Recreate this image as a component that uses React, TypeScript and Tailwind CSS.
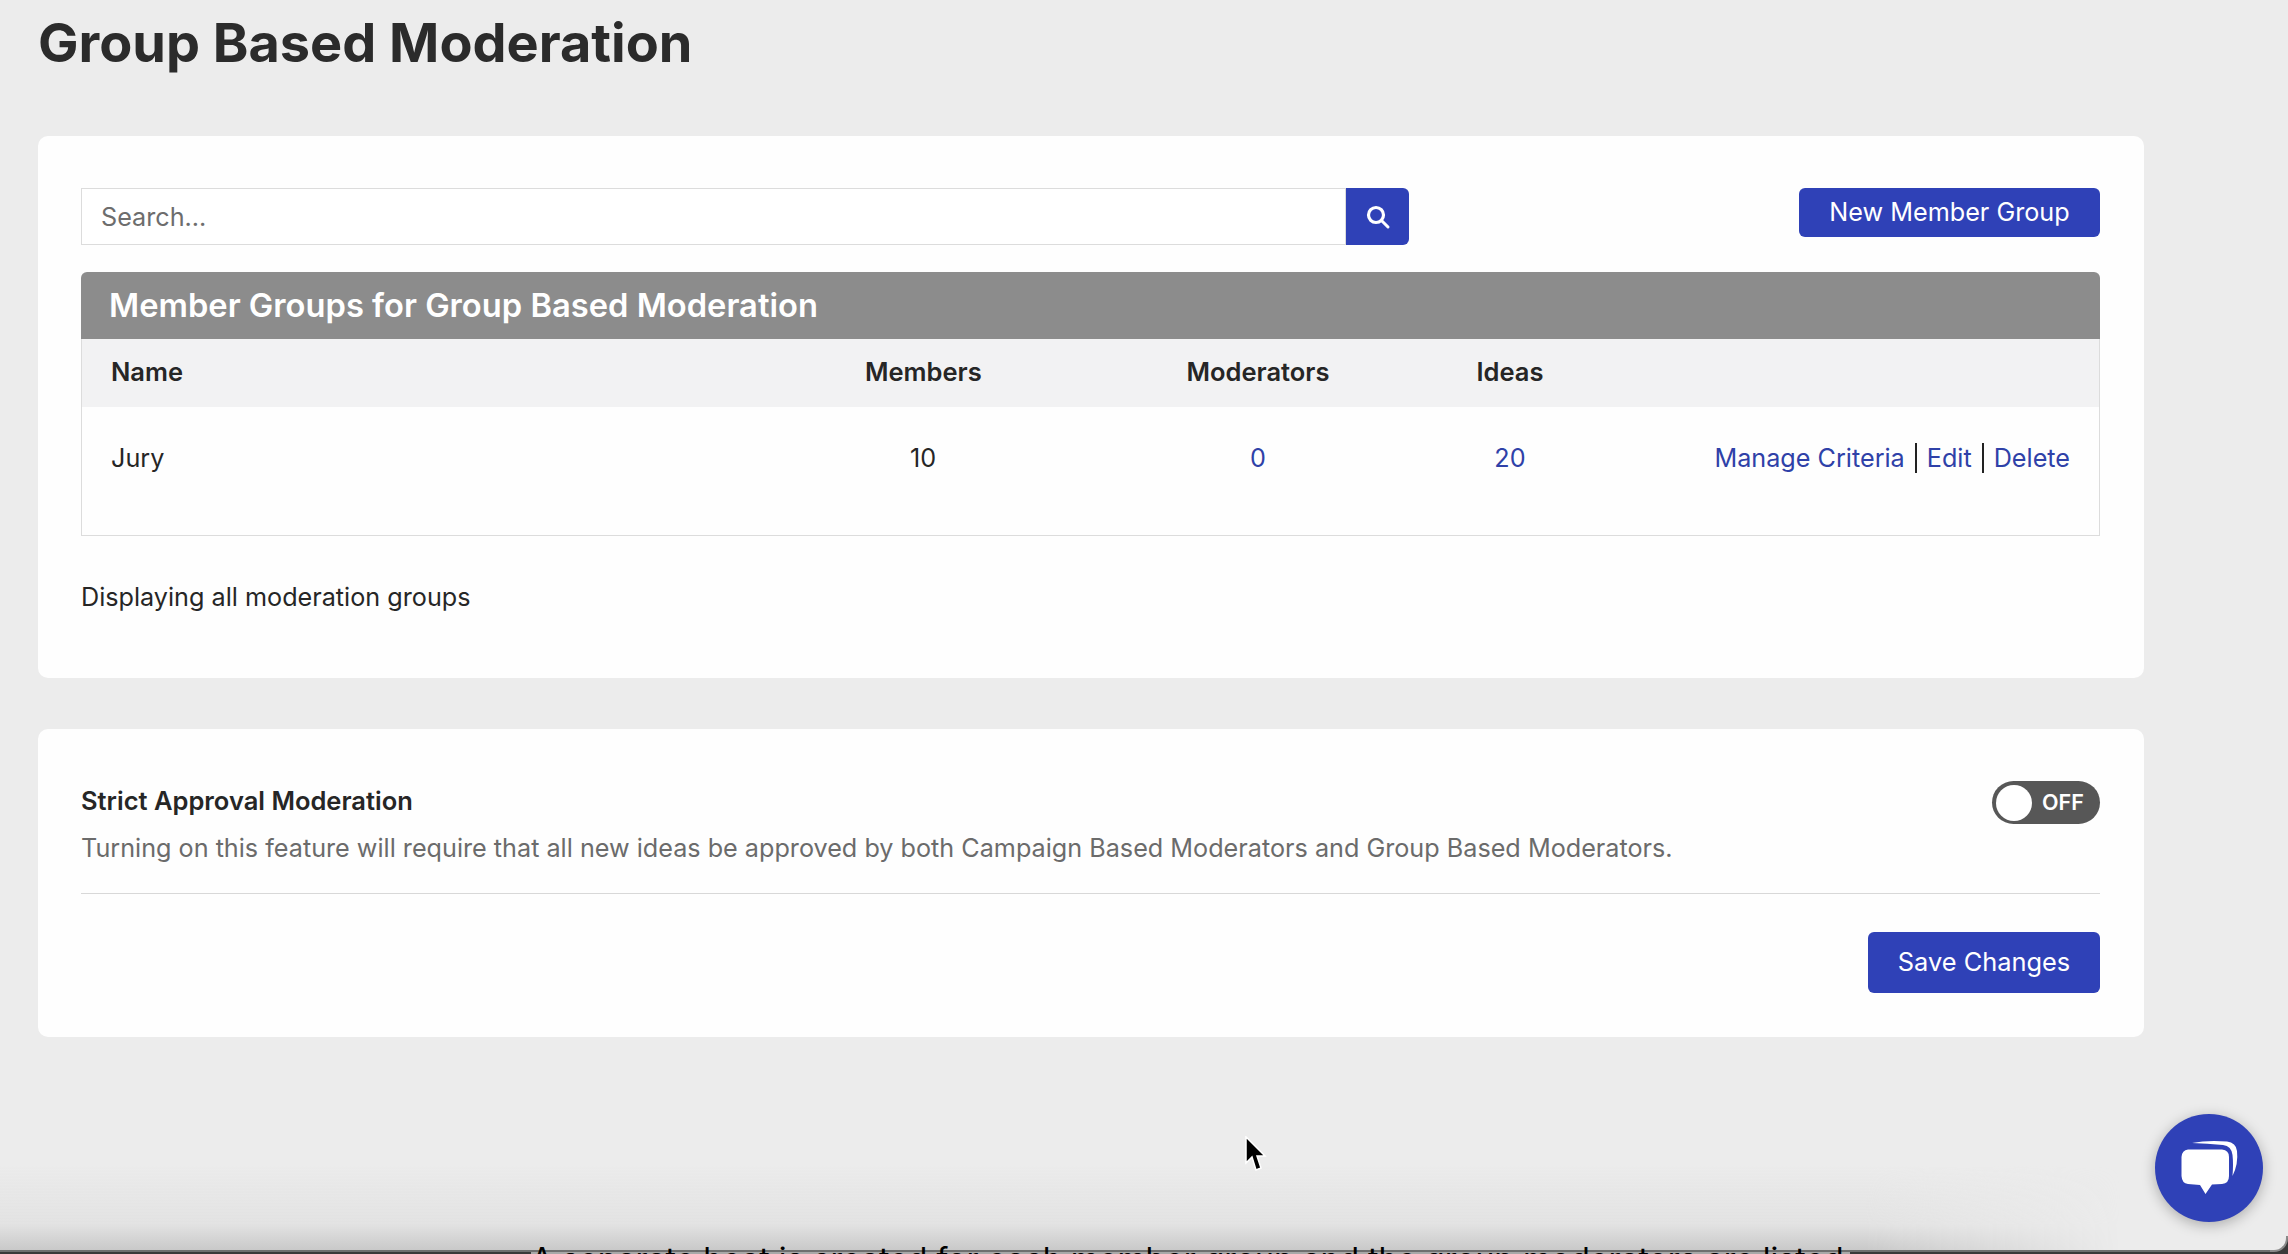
const inter = "font-['Inter',sans-serif]";

function SearchIcon() {
  return (
    <svg width="26" height="26" viewBox="0 0 26 26" fill="none" stroke="#fff">
      <circle cx="11" cy="11" r="7.500" strokeWidth="3.200" />
      <path d="M16.500 16.500 L23 23" strokeWidth="3" strokeLinecap="round" />
    </svg>
  );
}

function Toggle() {
  return (
    <div className="flex h-[43px] w-[108px] items-center rounded-full bg-[#575757] pl-[4px]">
      <span className="h-[36px] w-[36px] rounded-full bg-white" />
      <span className="ml-[10px] text-[21.500px] font-semibold text-white">OFF</span>
    </div>
  );
}

function ChatBubble() {
  return (
    <div className="absolute left-[2155px] top-[1114px] z-20 h-[108px] w-[108px] rounded-full bg-[#2f41b7] shadow-[0_3px_14px_rgba(0,0,0,0.28)]">
      <svg width="108" height="108" viewBox="0 0 108 108">
        <path d="M37 29 Q52 26 72 27.500 Q81 28.500 82 37 Q83.500 50 77.500 62 Q78.500 50 77.500 41 Q76.500 32 68 31 Q52 29.500 37 29 Z" fill="#fff" />
        <path d="M33 35.500 L67 35.500 Q74 36 74 43 L74 62 Q74 69.500 67 70 L57 70.500 L50.500 80 L45 71 L33 70 Q27 69.500 26.500 62 L26.500 43 Q27 36 33 35.500 Z" fill="#fff" />
      </svg>
    </div>
  );
}

function Cursor() {
  return (
    <svg className="absolute left-[1244px] top-[1136px] z-20" width="24" height="38" viewBox="0 0 24 38">
      <path d="M2 1 L2 27 L8 21 L12 34 L17 32 L13 20 L21 20 Z" fill="#000" stroke="#fff" strokeWidth="1.500" />
    </svg>
  );
}

export default function App() {
  return (
    <div className={`relative h-[1254px] w-[2288px] overflow-hidden bg-[#ececec] text-[#262626] ${inter}`}>
      <div className="pl-[38px] pr-[144px]">
        <h1 className="flex h-[136px] items-start pt-[12px] text-[54px] font-bold leading-[62px] text-[#2b2b2b]">Group Based Moderation</h1>

        <section className="h-[542px] rounded-[10px] bg-[#fefefe] pl-[43px] pr-[44px] pt-[52px]">
          <div className="flex items-start justify-between">
            <div className="flex h-[57px] w-[1328px]">
              <div className="flex flex-1 items-center border border-[#dcdcdc] bg-white pl-[19px] pt-[2px] text-[25.200px] text-[#6d6d6d]">Search...</div>
              <button className="flex w-[63px] items-center justify-center rounded-r-[6px] bg-[#2f41b7]">
                <SearchIcon />
              </button>
            </div>
            <button className="flex h-[49px] w-[301px] items-center justify-center rounded-[6px] bg-[#2f41b7] text-[25.200px] text-white">New Member Group</button>
          </div>

          <div className="mt-[27px]">
            <div className="flex h-[67px] items-center rounded-t-[6px] bg-[#8c8c8c] pl-[28px] text-[32.700px] font-semibold text-white">Member Groups for Group Based Moderation</div>
            <div className="h-[197px] border-x border-b border-[#dcdcdc]">
              <div className="flex h-[68px] items-center bg-[#f2f2f3] pb-[1px] text-[25.500px] font-semibold">
                <div className="w-[783px] pl-[29px]">Name</div>
                <div className="w-[116px] text-center">Members</div>
                <div className="ml-[202px] w-[150px] text-center">Moderators</div>
                <div className="ml-[137px] w-[80px] text-center">Ideas</div>
              </div>
              <div className="flex h-[102px] items-center pt-[1px] text-[25.200px]">
                <div className="w-[783px] pl-[29px]">Jury</div>
                <div className="w-[116px] text-center">10</div>
                <div className="ml-[202px] w-[150px] text-center text-[#2f41a8]">0</div>
                <div className="ml-[137px] w-[80px] text-center text-[#2f41a8]">20</div>
                <div className="ml-auto flex items-center pr-[29px] text-[#2f41a8]">
                  <span>Manage Criteria</span>
                  <span className="mx-[10px] h-[30px] w-[2px] bg-[#222]" />
                  <span>Edit</span>
                  <span className="mx-[10px] h-[30px] w-[2px] bg-[#222]" />
                  <span>Delete</span>
                </div>
              </div>
            </div>
          </div>

          <p className="mt-[45px] text-[25.200px] leading-[32px]">Displaying all moderation groups</p>
        </section>

        <section className="mt-[51px] h-[308px] rounded-[10px] bg-[#fefefe] pl-[43px] pr-[44px] pt-[52px]">
          <div className="flex h-[113px] items-start justify-between border-b border-[#d8d8d8]">
            <div className="pt-[4px]">
              <div className="text-[25.500px] font-semibold leading-[32px]">Strict Approval Moderation</div>
              <div className="mt-[15px] text-[25.200px] leading-[32px] text-[#6b6b6b]">Turning on this feature will require that all new ideas be approved by both Campaign Based Moderators and Group Based Moderators.</div>
            </div>
            <Toggle />
          </div>
          <div className="mt-[38px] flex justify-end">
            <button className="flex h-[61px] w-[232px] items-center justify-center rounded-[6px] bg-[#2f41b7] text-[25.400px] text-white">Save Changes</button>
          </div>
        </section>
      </div>

      <Cursor />
      <ChatBubble />

      {/* window edge of the next slide peeking in at the bottom */}
      <div className="absolute bottom-[4px] left-0 h-[84px] w-[2120px] bg-gradient-to-b from-transparent via-[#e2e2e2] via-70% to-[#c9c9c9] [mask-image:linear-gradient(to_right,black_88%,transparent)]" />
      <div className="absolute inset-x-0 bottom-0 h-[4px] overflow-hidden border-t-2 border-[#6f6f6f] bg-[#3a3a3a]">
        <div className="absolute left-[531px] top-0 h-full w-[1319px] bg-[#a8a8a8]" />
      </div>
      <div className="absolute bottom-0 right-0 h-[18px] w-[18px] bg-[#3a3a3a]">
        <div className="h-[16px] w-[18px] rounded-br-[14px] border-b-2 border-r-2 border-[#8a8a8a] bg-[#ececec]" />
      </div>
      <div className="absolute left-[531px] top-[1244px] whitespace-nowrap text-[32px] leading-[32px] text-black">A separate heat is created for each member group and the group moderators are listed</div>
    </div>
  );
}
